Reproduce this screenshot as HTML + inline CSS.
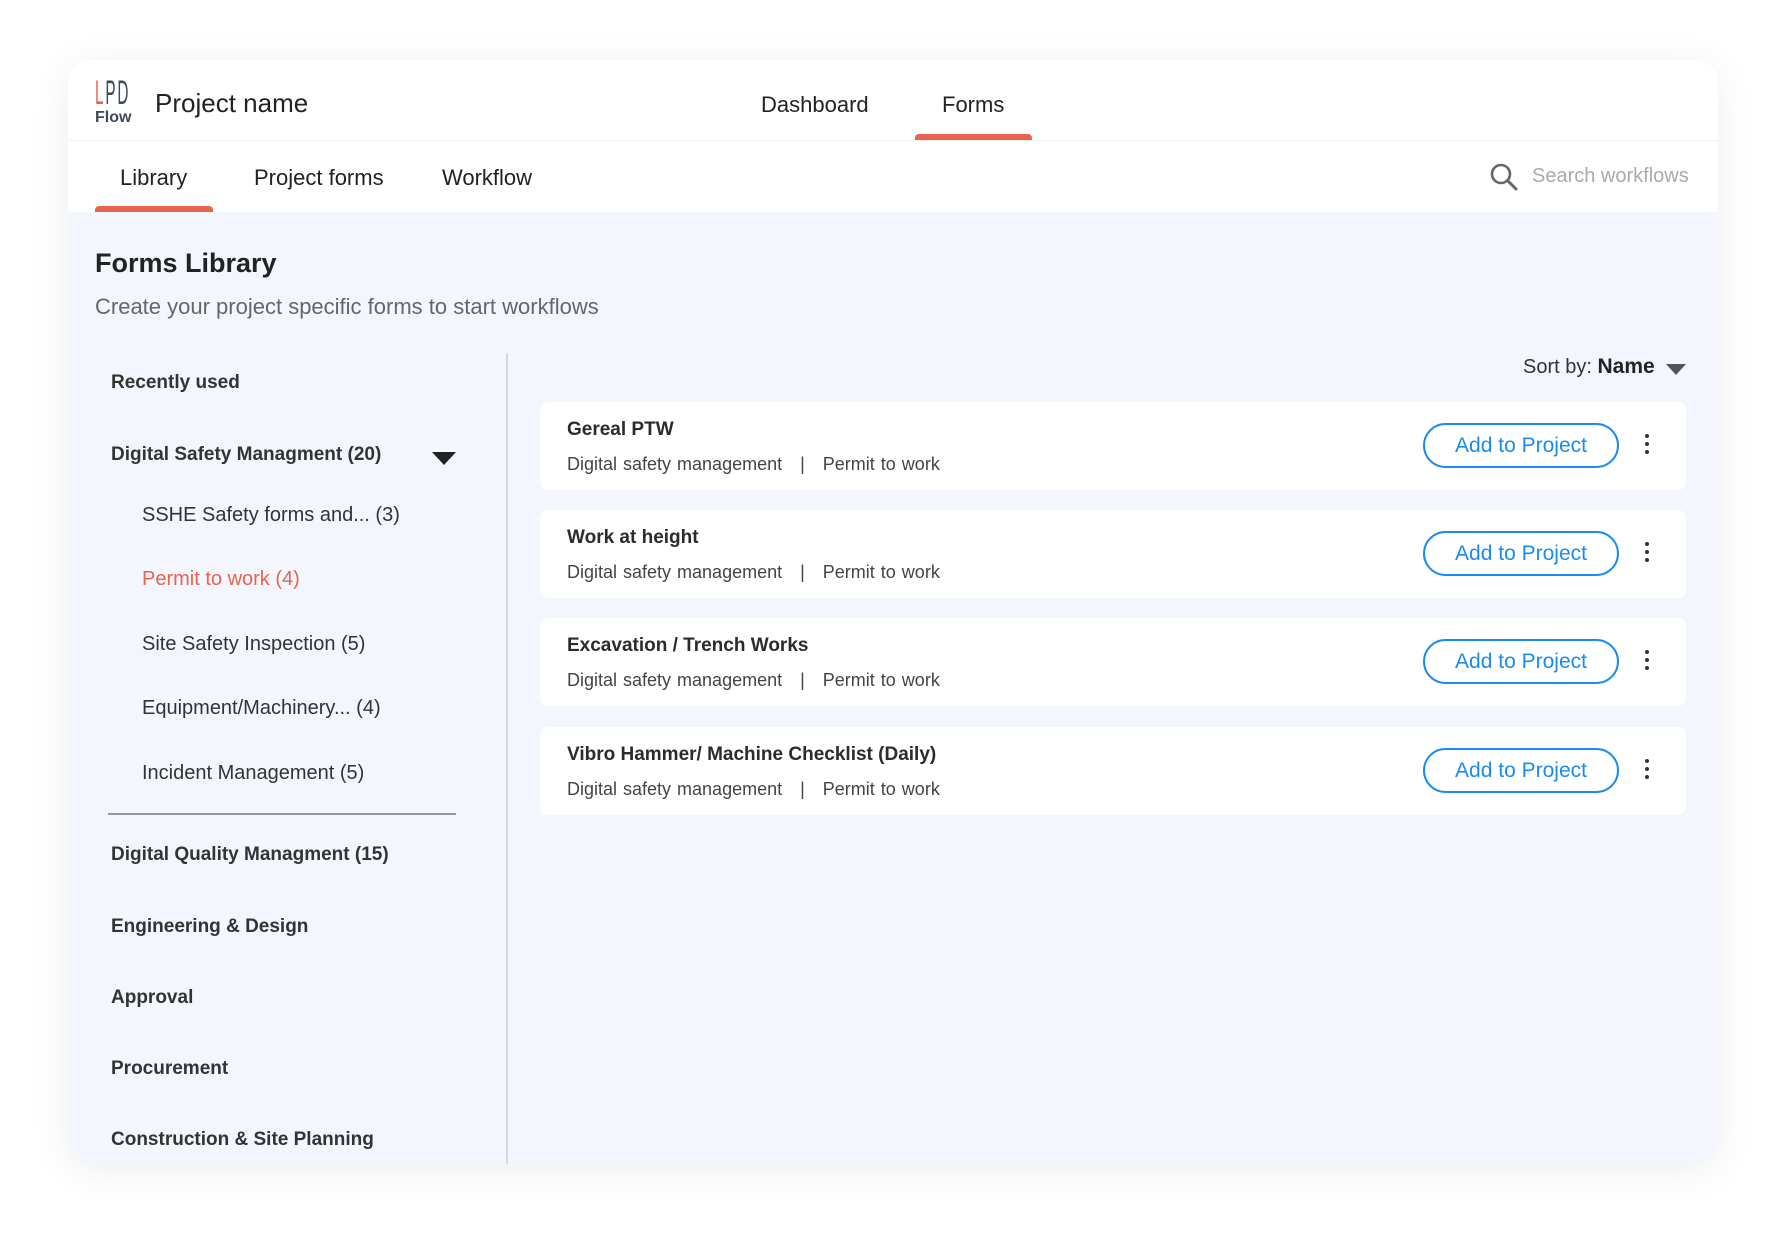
<!DOCTYPE html>
<html><head><meta charset="utf-8"><style>
*{margin:0;padding:0;box-sizing:border-box}
body{width:1786px;height:1240px;background:#fff;font-family:"Liberation Sans",Arial,sans-serif;position:relative;overflow:hidden;color:#222}
.a{position:absolute;white-space:nowrap}
#card{position:absolute;left:68px;top:60px;width:1650px;height:1104px;border-radius:22px;background:#f3f7fd;overflow:hidden;box-shadow:0 6px 40px rgba(0,0,0,.07)}
.top{position:absolute;left:0;top:0;width:1650px;height:152px;background:#fff}
.sep{position:absolute;left:0;top:80px;width:1650px;height:1px;background:#eef1f6}
.ul{position:absolute;height:6px;background:#e9634d;border-radius:4px 4px 0 0}
.nav{font-size:22px;color:#222}
.side1{font-size:19px;font-weight:bold;color:#333;left:43px}
.side2{font-size:20px;color:#333;left:74px}
.fc{position:absolute;left:472px;width:1146px;height:88px;background:#fff;border-radius:8px}
.fc .t{position:absolute;left:27px;top:17px;font-size:19px;font-weight:bold;color:#2b2b2b;white-space:nowrap}
.fc .s{position:absolute;left:27px;top:52px;font-size:18px;color:#444;white-space:nowrap;word-spacing:1px}
.btn{position:absolute;left:883px;top:21px;width:196px;height:45px;border:2px solid #1a8cf0;border-radius:23px;color:#1a8cf0;font-size:21px;text-align:center;line-height:41px}
.dots{position:absolute;left:1105px;top:32px;width:4px}
.dots i{display:block;width:4px;height:4px;border-radius:2px;background:#333;margin-bottom:4px}
</style></head><body>
<div id="card">
<div class="top"></div>
<div class="sep"></div>
<div class="a" style="left:27px;top:14px;font-size:34px;letter-spacing:4px;transform:scaleX(.45);transform-origin:left;"><span style="color:#e9634d">L</span><span style="color:#3a4a5e">PD</span></div>
<div class="a" style="left:27px;top:49px;font-size:16px;font-weight:bold;color:#3a4a5e">Flow</div>
<div class="a" style="left:87px;top:28px;font-size:26px;color:#222">Project name</div>
<div class="a nav" style="left:693px;top:32px">Dashboard</div>
<div class="a nav" style="left:874px;top:32px">Forms</div>
<div class="ul" style="left:847px;top:74px;width:117px"></div>
<div class="a nav" style="left:52px;top:105px">Library</div>
<div class="a nav" style="left:186px;top:105px">Project forms</div>
<div class="a nav" style="left:374px;top:105px">Workflow</div>
<div class="ul" style="left:27px;top:146px;width:118px"></div>
<svg class="a" style="left:1421px;top:102px" width="30" height="30" viewBox="0 0 30 30"><circle cx="12" cy="12" r="9" fill="none" stroke="#666" stroke-width="2.6"/><path d="M18.5 18.5L27 27" stroke="#666" stroke-width="3" stroke-linecap="round"/></svg>
<div class="a" style="left:1464px;top:105px;font-size:20px;color:#aaa">Search workflows</div>
<div class="a" style="left:27px;top:188px;font-size:27px;font-weight:bold;color:#222">Forms Library</div>
<div class="a" style="left:27px;top:234px;font-size:22px;color:#666">Create your project specific forms to start workflows</div>
<div class="a side1" style="top:312px">Recently used</div>
<div class="a side1" style="top:384px">Digital Safety Managment (20)</div>
<svg class="a" style="left:364px;top:392px" width="24" height="14"><path d="M0 0H24L12 13Z" fill="#222"/></svg>
<div class="a side2" style="top:444px">SSHE Safety forms and... (3)</div>
<div class="a side2" style="top:508px;color:#e9634d">Permit to work (4)</div>
<div class="a side2" style="top:573px">Site Safety Inspection (5)</div>
<div class="a side2" style="top:637px">Equipment/Machinery... (4)</div>
<div class="a side2" style="top:702px">Incident Management (5)</div>
<div class="a" style="left:40px;top:753px;width:348px;height:2px;background:#999"></div>
<div class="a side1" style="top:784px">Digital Quality Managment (15)</div>
<div class="a side1" style="top:856px">Engineering &amp; Design</div>
<div class="a side1" style="top:927px">Approval</div>
<div class="a side1" style="top:998px">Procurement</div>
<div class="a side1" style="top:1069px">Construction &amp; Site Planning</div>
<div class="a" style="left:438px;top:293px;width:2px;height:811px;background:#d4d8de"></div>
<div class="a" style="left:1455px;top:295px;font-size:20px;color:#333">Sort by: <b style="font-size:21px;color:#222">Name</b></div>
<svg class="a" style="left:1598px;top:304px" width="20" height="12"><path d="M0 0H20L10 11Z" fill="#555"/></svg>
<div class="fc" style="top:342px"><div class="t">Gereal PTW</div><div class="s">Digital safety management &nbsp;&nbsp;| &nbsp;&nbsp;Permit to work</div><div class="btn">Add to Project</div><div class="dots"><i></i><i></i><i></i></div></div>
<div class="fc" style="top:450px"><div class="t">Work at height</div><div class="s">Digital safety management &nbsp;&nbsp;| &nbsp;&nbsp;Permit to work</div><div class="btn">Add to Project</div><div class="dots"><i></i><i></i><i></i></div></div>
<div class="fc" style="top:558px"><div class="t">Excavation / Trench Works</div><div class="s">Digital safety management &nbsp;&nbsp;| &nbsp;&nbsp;Permit to work</div><div class="btn">Add to Project</div><div class="dots"><i></i><i></i><i></i></div></div>
<div class="fc" style="top:667px"><div class="t">Vibro Hammer/ Machine Checklist (Daily)</div><div class="s">Digital safety management &nbsp;&nbsp;| &nbsp;&nbsp;Permit to work</div><div class="btn">Add to Project</div><div class="dots"><i></i><i></i><i></i></div></div>
</div>
</body></html>
